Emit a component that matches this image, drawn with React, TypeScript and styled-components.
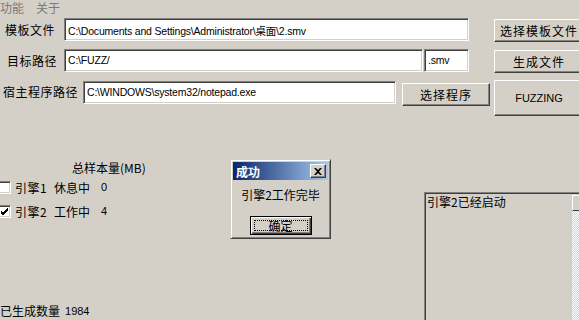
import styled, { createGlobalStyle } from "styled-components";

const GlobalStyle = createGlobalStyle`
  html, body {
    margin: 0;
    padding: 0;
    background: #d4d0c8;
  }
  * {
    box-sizing: border-box;
  }
`;

const cjk = `"Noto Sans CJK SC", "Liberation Sans", sans-serif`;
const latin = `"Liberation Sans", "Noto Sans CJK SC", sans-serif`;

const Window = styled.div`
  position: relative;
  width: 579px;
  height: 320px;
  overflow: hidden;
  background: #d4d0c8;
  font-family: ${cjk};
  font-size: 12px;
  color: #000;
`;

const MenuBar = styled.div`
  height: 16px;
  display: flex;
  align-items: center;
  gap: 12px;
`;

const MenuItem = styled.span`
  color: #7a7a7a;
  line-height: 16px;
`;

const Form = styled.div`
  display: flex;
  flex-direction: column;
`;

const Row = styled.div<{ $top: number; $height: number }>`
  display: flex;
  align-items: flex-start;
  margin-top: ${(p) => p.$top}px;
  height: ${(p) => p.$height}px;
  & > * {
    flex-shrink: 0;
  }
`;

const Label = styled.div<{ $width: number; $pad: number }>`
  width: ${(p) => p.$width}px;
  padding-left: ${(p) => p.$pad}px;
  padding-top: 3px;
  letter-spacing: 0.5px;
  white-space: nowrap;
`;

const Input = styled.div<{ $width: number; $height?: number; $ml?: number; $mt?: number }>`
  width: ${(p) => p.$width}px;
  height: ${(p) => p.$height ?? 23}px;
  margin-left: ${(p) => p.$ml ?? 0}px;
  margin-top: ${(p) => p.$mt ?? 0}px;
  background: #fff;
  border: 1px solid;
  border-color: #808080 #fff #fff #808080;
  box-shadow: inset 1px 1px #404040, inset -1px -1px #d4d0c8;
  font-family: ${latin};
  font-size: 10.5px;
  letter-spacing: -0.2px;
  padding: 4px 3px 0;
  white-space: nowrap;
  overflow: hidden;
`;

const Button = styled.div<{ $width: number; $height: number; $ml: number; $mt?: number }>`
  width: ${(p) => p.$width}px;
  height: ${(p) => p.$height}px;
  margin-left: ${(p) => p.$ml}px;
  margin-top: ${(p) => p.$mt ?? 0}px;
  background: #d4d0c8;
  border: 1px solid;
  border-color: #fff #404040 #404040 #fff;
  box-shadow: inset -1px -1px #808080, inset 1px 1px #d4d0c8;
  display: flex;
  align-items: center;
  justify-content: center;
  white-space: nowrap;
  letter-spacing: 1px;
`;

const LatinText = styled.span`
  font-family: ${latin};
  font-size: 11px;
  letter-spacing: 0;
`;

const Lower = styled.div`
  display: flex;
  margin-top: 44px;
  & > * {
    flex-shrink: 0;
  }
`;

const Stats = styled.div`
  width: 424px;
  display: flex;
  flex-direction: column;
`;

const TotalLabel = styled.div`
  padding-left: 72px;
  height: 16px;
  line-height: 16px;
`;

const EngineRow = styled.div<{ $top: number }>`
  display: flex;
  align-items: center;
  height: 16px;
  margin-top: ${(p) => p.$top}px;
`;

const CheckBox = styled.div`
  width: 13px;
  height: 13px;
  background: #fff;
  border: 1px solid;
  border-color: #808080 #fff #fff #808080;
  box-shadow: inset 1px 1px #404040, inset -1px -1px #d4d0c8;
  display: flex;
  align-items: center;
  justify-content: center;
  margin-left: -2px;
`;

const EngineName = styled.span`
  width: 43px;
  padding-left: 4px;
  letter-spacing: 0.5px;
`;

const State = styled.span`
  width: 47px;
`;

const Value = styled.span`
  font-family: ${latin};
  font-size: 11px;
`;

const Count = styled.div`
  display: flex;
  align-items: center;
  margin-top: 83px;
  gap: 5px;
`;

const Log = styled.div`
  position: relative;
  width: 170px;
  height: 140px;
  margin-top: 32px;
  border: 1px solid;
  border-color: #808080 #fff #fff #808080;
  box-shadow: inset 1px 1px #404040;
  padding: 2px 2px;
  line-height: 14px;
  background: #d4d0c8;
`;

const ScrollBar = styled.div`
  position: absolute;
  left: 147px;
  top: 2px;
  bottom: 0;
  width: 16px;
  background-color: #eae8e4;
  background-image: repeating-conic-gradient(#fff 0 25%, #d4d0c8 0 50%);
  background-size: 2px 2px;
`;

const ScrollButton = styled.div`
  height: 16px;
  background: #d4d0c8;
  border: 1px solid;
  border-color: #fff #404040 #404040 #fff;
`;

const Dialog = styled.div`
  position: absolute;
  left: 230px;
  top: 159px;
  width: 101px;
  height: 80px;
  background: #d4d0c8;
  border: 1px solid;
  border-color: #d4d0c8 #404040 #404040 #d4d0c8;
  box-shadow: inset 1px 1px #fff, inset -1px -1px #808080;
  padding: 2px;
  display: flex;
  flex-direction: column;
`;

const TitleBar = styled.div`
  height: 18px;
  background: linear-gradient(to right, #0a246a, #a6caf0);
  display: flex;
  align-items: center;
  justify-content: space-between;
  padding: 0 2px 0 3px;
  color: #fff;
  font-weight: bold;
`;

const CloseButton = styled.div`
  width: 16px;
  height: 14px;
  background: #d4d0c8;
  border: 1px solid;
  border-color: #fff #404040 #404040 #fff;
  box-shadow: inset -1px -1px #808080;
  display: flex;
  align-items: center;
  justify-content: center;
`;

const Message = styled.div`
  text-align: center;
  margin-top: 7px;
  height: 16px;
  line-height: 16px;
`;

const OkButton = styled.div`
  align-self: center;
  margin-top: 13px;
  width: 62px;
  height: 19px;
  border: 1px solid #000;
  background: #d4d0c8;
  box-shadow: inset 1px 1px #fff, inset -1px -1px #404040, inset -2px -2px #808080;
  display: flex;
  align-items: center;
  justify-content: center;
  position: relative;
  &::after {
    content: "";
    position: absolute;
    inset: 3px;
    border: 1px dotted #000;
  }
`;

export default function App() {
  return (
    <>
      <GlobalStyle />
      <Window>
        <MenuBar>
          <MenuItem>功能</MenuItem>
          <MenuItem>关于</MenuItem>
        </MenuBar>
        <Form>
          <Row $top={2} $height={24}>
            <Label $width={64} $pad={5}>模板文件</Label>
            <Input $width={405}>C:\Documents and Settings\Administrator\桌面\2.smv</Input>
            <Button $width={90} $height={23} $ml={25} $mt={1}>选择模板文件</Button>
          </Row>
          <Row $top={7} $height={23}>
            <Label $width={64} $pad={7}>目标路径</Label>
            <Input $width={359}>C:\FUZZ/</Input>
            <Input $width={45} $ml={1}>.smv</Input>
            <Button $width={90} $height={23} $ml={25} $mt={1}>生成文件</Button>
          </Row>
          <Row $top={8} $height={36}>
            <Label $width={83} $pad={3}>宿主程序路径</Label>
            <Input $width={313} $mt={1}>C:\WINDOWS\system32/notepad.exe</Input>
            <Button $width={88} $height={23} $ml={6} $mt={3}>选择程序</Button>
            <Button $width={90} $height={36} $ml={4}>
              <LatinText>FUZZING</LatinText>
            </Button>
          </Row>
        </Form>
        <Lower>
          <Stats>
            <TotalLabel>总样本量(MB)</TotalLabel>
            <EngineRow $top={3}>
              <CheckBox />
              <EngineName>引擎1</EngineName>
              <State>休息中</State>
              <Value>0</Value>
            </EngineRow>
            <EngineRow $top={8}>
              <CheckBox>
                <svg width="9" height="9" viewBox="0 0 9 9">
                  <path d="M1 4 L3 6 L8 1 M1 5 L3 7 L8 2 M1 6 L3 8 L8 3" stroke="#000" strokeWidth="1" fill="none" />
                </svg>
              </CheckBox>
              <EngineName>引擎2</EngineName>
              <State>工作中</State>
              <Value>4</Value>
            </EngineRow>
            <Count>
              <span>已生成数量</span>
              <Value>1984</Value>
            </Count>
          </Stats>
          <Log>
            引擎2已经启动
            <ScrollBar>
              <ScrollButton />
            </ScrollBar>
          </Log>
        </Lower>
        <Dialog>
          <TitleBar>
            <span>成功</span>
            <CloseButton>
              <svg width="8" height="7" viewBox="0 0 8 7">
                <path d="M0 0 L2 0 L4 2 L6 0 L8 0 L5 3.5 L8 7 L6 7 L4 5 L2 7 L0 7 L3 3.5 Z" fill="#000" />
              </svg>
            </CloseButton>
          </TitleBar>
          <Message>引擎2工作完毕</Message>
          <OkButton>确定</OkButton>
        </Dialog>
      </Window>
    </>
  );
}
